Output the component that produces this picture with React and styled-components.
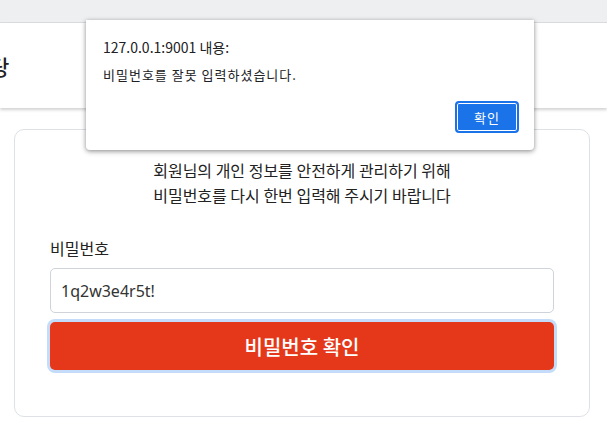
import React from 'react';
import styled, {createGlobalStyle} from 'styled-components';

const GlobalStyle = createGlobalStyle`
  html, body {
    margin: 0;
    padding: 0;
    background: #ffffff;
    font-family: "Noto Sans CJK KR", "Noto Sans", sans-serif;
    color: #212529;
  }
  * { box-sizing: border-box; }
`;

const Page = styled.div`
  position: relative;
  width: 607px;
  height: 426px;
  overflow: hidden;
  background: #fff;
`;

const TopStrip = styled.div`
  height: 23px;
  background: #eeeff1;
  border-bottom: 1px solid #dadce0;
`;

const Header = styled.header`
  height: 85px;
  display: flex;
  align-items: center;
  background: #fff;
  box-shadow: 0 2px 3px rgba(0, 0, 0, 0.18);
`;

const HeaderTitle = styled.h1`
  margin: 0 0 0 -10px;
  font-size: 21px;
  font-weight: 500;
  color: #222;
`;

const Main = styled.main`
  padding: 21px 17px 0 14px;
`;

const Card = styled.section`
  border: 1px solid #dee2e6;
  border-radius: 10px;
  padding: 28px 35px 46px 35px;
  display: flex;
  flex-direction: column;
`;

const Notice = styled.p`
  margin: 0 0 29px;
  text-align: center;
  font-size: 16px;
  line-height: 25px;
  color: #222;
`;

const Label = styled.label`
  font-size: 16px;
  line-height: 22px;
  margin-bottom: 9px;
  color: #222;
`;

const Input = styled.input`
  height: 45px;
  border: 1px solid #ced4da;
  border-radius: 5px;
  padding: 0 10px;
  font-family: "Noto Sans", "Noto Sans CJK KR", sans-serif;
  font-size: 16px;
  color: #333;
  outline: none;
`;

const SubmitButton = styled.button`
  margin-top: 9px;
  height: 48px;
  border: none;
  border-radius: 5px;
  background: #e5381a;
  color: #fff;
  font-family: "Noto Sans CJK KR", sans-serif;
  font-size: 20px;
  font-weight: 500;
  box-shadow: 0 0 0 3px #c4dcfa;
`;

const Dialog = styled.div`
  position: absolute;
  left: 86px;
  top: 20px;
  width: 448px;
  height: 130px;
  background: #fff;
  border-radius: 0 0 4px 4px;
  box-shadow: 0 1px 4px rgba(0, 0, 0, 0.35), 0 2px 6px rgba(0, 0, 0, 0.15);
  padding: 17px 15px 17px 17px;
  display: flex;
  flex-direction: column;
  font-family: "Noto Sans CJK KR", "Liberation Sans", sans-serif;
  color: #202124;
`;

const DialogTitle = styled.div`
  font-size: 14px;
  line-height: 20px;
`;

const DialogMessage = styled.div`
  margin-top: 9px;
  font-size: 13px;
  letter-spacing: 1px;
  line-height: 18px;
`;

const DialogActions = styled.div`
  margin-top: auto;
  display: flex;
  justify-content: flex-end;
`;

const DialogButton = styled.button`
  width: 64px;
  height: 32px;
  border: 2px solid #1a73e8;
  border-radius: 4px;
  background: #1a73e8;
  box-shadow: inset 0 0 0 1px #fff;
  color: #fff;
  font-family: "Noto Sans CJK KR", sans-serif;
  font-size: 13px;
  letter-spacing: 1px;
`;

export default function App() {
  return (
    <Page>
      <GlobalStyle />
      <TopStrip />
      <Header>
        <HeaderTitle>당</HeaderTitle>
      </Header>
      <Main>
        <Card>
          <Notice>
            회원님의 개인 정보를 안전하게 관리하기 위해
            <br />
            비밀번호를 다시 한번 입력해 주시기 바랍니다
          </Notice>
          <Label htmlFor="pw">비밀번호</Label>
          <Input id="pw" type="text" defaultValue="1q2w3e4r5t!" />
          <SubmitButton>비밀번호 확인</SubmitButton>
        </Card>
      </Main>
      <Dialog>
        <DialogTitle>127.0.0.1:9001 내용:</DialogTitle>
        <DialogMessage>비밀번호를 잘못 입력하셨습니다.</DialogMessage>
        <DialogActions>
          <DialogButton>확인</DialogButton>
        </DialogActions>
      </Dialog>
    </Page>
  );
}
